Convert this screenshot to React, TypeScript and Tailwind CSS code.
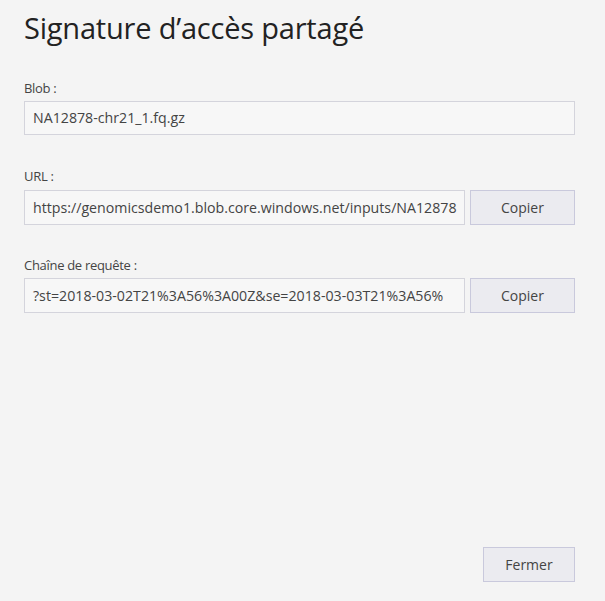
export default function App() {
  const font = { fontFamily: '"Open Sans", "Noto Sans", sans-serif' };
  return (
    <div
      className="w-[605px] h-[601px] bg-[#f4f4f4] text-[#333] flex flex-col pl-6 pr-[30px]"
      style={font}
    >
      <h1 className="text-[29px] leading-[36px] text-[#222] font-normal pt-[10px] tracking-[-0.2px]">
        Signature d’accès partagé
      </h1>

      <div className="mt-[33px] flex flex-col">
        <label className="text-[13px] leading-[18px] text-[#444] tracking-[-0.3px]">Blob :</label>
        <div className="mt-[4px] h-[34px] border border-[#d4d4dc] bg-[#f7f7f7] flex items-center px-2 text-[14.2px] text-[#444]">
          NA12878-chr21_1.fq.gz
        </div>
      </div>

      <div className="mt-[32px] flex flex-col">
        <label className="text-[13px] leading-[18px] text-[#444] tracking-[-0.3px]">URL :</label>
        <div className="mt-[5px] flex gap-[5px]">
          <div className="w-[441px] h-[35px] border border-[#d4d4dc] bg-[#f7f7f7] flex items-center pl-2 text-[14.2px] text-[#444] overflow-hidden whitespace-nowrap">
            https://genomicsdemo1.blob.core.windows.net/inputs/NA12878
          </div>
          <button className="w-[105px] h-[35px] border border-[#c9c9dc] bg-[#ebebf0] text-[14px] text-[#444]">
            Copier
          </button>
        </div>
      </div>

      <div className="mt-[31px] flex flex-col">
        <label className="text-[13px] leading-[18px] text-[#444] tracking-[-0.3px]">Chaîne de requête :</label>
        <div className="mt-[4px] flex gap-[5px]">
          <div className="w-[441px] h-[35px] border border-[#d4d4dc] bg-[#f7f7f7] flex items-center pl-2 text-[14.2px] text-[#444] overflow-hidden whitespace-nowrap">
            ?st=2018-03-02T21%3A56%3A00Z&amp;se=2018-03-03T21%3A56%
          </div>
          <button className="w-[105px] h-[35px] border border-[#c9c9dc] bg-[#ebebf0] text-[14px] text-[#444]">
            Copier
          </button>
        </div>
      </div>

      <div className="mt-auto mb-[19px] flex justify-end">
        <button className="w-[92px] h-[35px] border border-[#c9c9dc] bg-[#ebebf0] text-[14px] text-[#444]">
          Fermer
        </button>
      </div>
    </div>
  );
}
